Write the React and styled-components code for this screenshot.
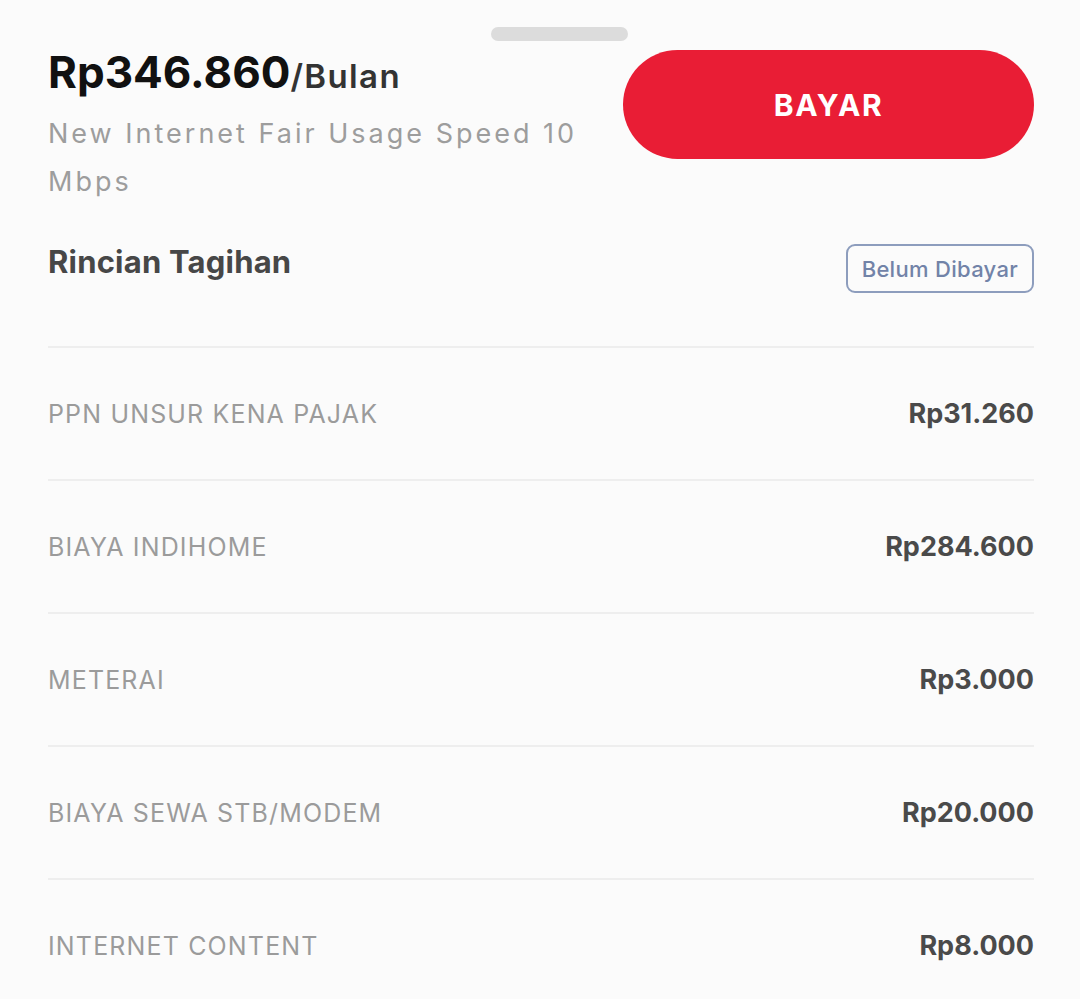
import styled, { createGlobalStyle } from "styled-components"

const GlobalStyle = createGlobalStyle`
    html, body {
        margin: 0;
        padding: 0;
        background: #fbfbfb;
        overflow: hidden;
    }
    body {
        font-family: Inter, "Noto Sans", sans-serif;
    }
`

const Sheet = styled.div`
    width: 1080px;
    min-height: 999px;
    box-sizing: border-box;
    padding: 27px 46px 0 48px;
    background: #fbfbfb;
    display: flex;
    flex-direction: column;
    & > * {
        flex-shrink: 0;
    }
`

const Handle = styled.div`
    width: 137px;
    height: 14px;
    border-radius: 7px;
    background: #dcdcdc;
    margin-left: 443px;
`

const Top = styled.div`
    display: flex;
    justify-content: space-between;
    align-items: flex-start;
    margin-top: 9px;
`

const PriceBox = styled.div`
    width: 570px;
    display: flex;
    flex-direction: column;
`

const Price = styled.div`
    font-size: 44px;
    line-height: 44px;
    font-weight: 700;
    color: #111;
    letter-spacing: 0;
`

const Per = styled.span`
    font-size: 33px;
    font-weight: 600;
    color: #333;
    letter-spacing: 1.4px;
`

const Plan = styled.div`
    margin-top: 12px;
    font-size: 27px;
    line-height: 48px;
    color: #9d9d9d;
    letter-spacing: 3px;
`

const PayButton = styled.button`
    width: 411px;
    height: 109px;
    border: none;
    border-radius: 55px;
    background: #e91d35;
    color: #fff;
    font-family: inherit;
    font-size: 30px;
    font-weight: 700;
    letter-spacing: 1.6px;
    cursor: pointer;
`

const Header = styled.div`
    display: flex;
    justify-content: space-between;
    align-items: flex-start;
    margin-top: 36px;
    padding-bottom: 53px;
    border-bottom: 2px solid #eeeeee;
`

const Title = styled.div`
    font-size: 31px;
    line-height: 40px;
    font-weight: 700;
    color: #474747;
    letter-spacing: 0.2px;
`

const Badge = styled.div`
    margin-top: 2px;
    box-sizing: border-box;
    height: 49px;
    padding: 0 14px;
    display: flex;
    align-items: center;
    border: 2px solid #8d9dbd;
    border-radius: 9px;
    font-size: 22px;
    font-weight: 500;
    color: #7283a8;
    letter-spacing: 0.3px;
`

const Row = styled.div`
    display: flex;
    justify-content: space-between;
    align-items: center;
    height: 131px;
    border-bottom: ${(p) => (p.last ? "none" : "2px solid #eeeeee")};
`

const Label = styled.div`
    font-size: 25px;
    color: #9b9b9b;
    letter-spacing: 1.15px;
`

const Amount = styled.div`
    font-size: 27px;
    font-weight: 700;
    color: #4a4a4a;
`

const items = [
    { label: "PPN UNSUR KENA PAJAK", amount: "Rp31.260" },
    { label: "BIAYA INDIHOME", amount: "Rp284.600" },
    { label: "METERAI", amount: "Rp3.000" },
    { label: "BIAYA SEWA STB/MODEM", amount: "Rp20.000" },
    { label: "INTERNET CONTENT", amount: "Rp8.000" },
]

const App = () => {
    return (
        <>
            <GlobalStyle />
            <Sheet>
                <Handle />
                <Top>
                    <PriceBox>
                        <Price>Rp346.860<Per>/Bulan</Per></Price>
                        <Plan>New Internet Fair Usage Speed 10 Mbps</Plan>
                    </PriceBox>
                    <PayButton>BAYAR</PayButton>
                </Top>
                <Header>
                    <Title>Rincian Tagihan</Title>
                    <Badge>Belum Dibayar</Badge>
                </Header>
                {items.map((item, idx) => (
                    <Row key={idx} last={idx === items.length - 1}>
                        <Label>{item.label}</Label>
                        <Amount>{item.amount}</Amount>
                    </Row>
                ))}
            </Sheet>
        </>
    )
}

export default App
